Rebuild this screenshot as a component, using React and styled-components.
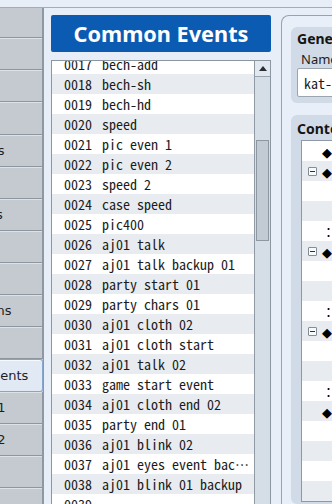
import React from "react"
import styled, { createGlobalStyle } from "styled-components"

const tabs = [
  "Actors",
  "Classes",
  "Skills",
  "Items",
  "Weapons",
  "Armors",
  "Enemies",
  "Troops",
  "States",
  "Animations",
  "Tilesets",
  "Common Events",
  "System 1",
  "System 2",
  "Types",
  "Terms",
]

const events = [
  [17, "bech-add"],
  [18, "bech-sh"],
  [19, "bech-hd"],
  [20, "speed"],
  [21, "pic even 1"],
  [22, "pic even 2"],
  [23, "speed 2"],
  [24, "case speed"],
  [25, "pic400"],
  [26, "aj01 talk"],
  [27, "aj01 talk backup 01"],
  [28, "party start 01"],
  [29, "party chars 01"],
  [30, "aj01 cloth 02"],
  [31, "aj01 cloth start"],
  [32, "aj01 talk 02"],
  [33, "game start event"],
  [34, "aj01 cloth end 02"],
  [35, "party end 01"],
  [36, "aj01 blink 02"],
  [37, "aj01 eyes event backup"],
  [38, "aj01 blink 01 backup"],
  [39, ""],
  [40, ""],
]

const commands = [
  { text: "◆Comment：kat-talk" },
  { text: "◆If：Switch 0001 is ON", toggle: true },
  { text: "◆Show Picture：1, aj01", indent: 1 },
  { text: "◆Wait：30 frames", indent: 1 },
  { text: "：End" },
  { text: "◆If：Switch 0002 is ON", toggle: true },
  { text: "◆Show Picture：2, aj01", indent: 1 },
  { text: "◆Wait：30 frames", indent: 1 },
  { text: "：End" },
  { text: "◆If：Switch 0003 is ON", toggle: true },
  { text: "◆Show Picture：3, aj01", indent: 1 },
  { text: "◆Wait：30 frames", indent: 1 },
  { text: "：End" },
  { text: "◆Erase Picture：1" },
  { text: "", indent: 1 },
  { text: "", indent: 1 },
  { text: "", indent: 1 },
  { text: "", indent: 1 },
]

const mono = `"Noto Sans Mono CJK JP", "DejaVu Sans Mono", monospace`

const GlobalStyle = createGlobalStyle`
  html, body {
    margin: 0;
    padding: 0;
    background: #e7eef7;
  }
  body {
    font-family: "Noto Sans", "DejaVu Sans", sans-serif;
    color: #1b1b1b;
  }
`

const Window = styled.div`
  width: 332px;
  height: 504px;
  overflow: hidden;
  background: #e7eef7;
  display: flex;
  flex-direction: column;
`

const TopStrip = styled.div`
  flex: none;
  height: 7px;
  border-bottom: 1px solid #a2acb6;
`

const Body = styled.div`
  flex: 1;
  display: flex;
  min-height: 0;
`

const Sidebar = styled.nav`
  flex: none;
  width: 135px;
  margin-left: -92px;
  overflow: hidden;
  background: #c4cad0;
`

const TabList = styled.div`
  margin-top: -2px;
  display: flex;
  flex-direction: column;
`

const Tab = styled.div`
  flex: none;
  height: 32.14px;
  box-sizing: border-box;
  display: flex;
  align-items: center;
  justify-content: center;
  font-family: "DejaVu Sans", sans-serif;
  font-size: 13px;
  white-space: nowrap;
  color: #1e1e1e;
  background: ${(p) => (p.$active ? "#e0e9f4" : "#c4cad0")};
  border-right: 1px solid ${(p) => (p.$active ? "#86a5cb" : "#8e98a2")};
  border-bottom: 1px solid ${(p) => (p.$active ? "#86a5cb" : "#8e969f")};
  border-top: ${(p) => (p.$active ? "1px solid #86a5cb" : "none")};
  border-radius: ${(p) => (p.$active ? "3px" : "0")};
  box-shadow: inset 0 1px 0 ${(p) => (p.$active ? "#f6f9fd" : "#dde2e7")};
`

const Main = styled.main`
  flex: 1;
  min-width: 0;
  display: flex;
  gap: 10px;
  padding: 7px 0 0 7px;
  border-left: 1px solid #8e98a2;
`

const ListColumn = styled.section`
  flex: none;
  width: 220px;
  display: flex;
  flex-direction: column;
  gap: 8px;
`

const TitleBar = styled.h1`
  flex: none;
  margin: 0;
  height: 37px;
  border-radius: 2px;
  background: #0b5bb3;
  color: #fff;
  display: flex;
  align-items: center;
  justify-content: center;
  font-family: "Noto Sans", sans-serif;
  font-weight: 700;
  font-size: 21.7px;
`

const ListBox = styled.div`
  flex: 1;
  min-height: 0;
  display: flex;
  border: 1px solid #8c96a0;
  border-bottom: none;
  background: #fff;
`

const Rows = styled.ul`
  flex: 1;
  min-width: 0;
  margin: 0;
  padding: 0;
  list-style: none;
  overflow: hidden;
`

const RowsInner = styled.div`
  margin-top: -7px;
`

const EventRow = styled.li`
  height: 20px;
  display: flex;
  align-items: center;
  padding: 0 2px 0 12px;
  background: ${(p) => (p.$shaded ? "#e8ecf0" : "#fff")};
  font-family: ${mono};
  font-size: 14px;
  color: #1c1c1c;
  white-space: nowrap;
`

const EventId = styled.span`
  flex: none;
  width: 38px;
`

const EventName = styled.span`
  flex: 1;
  min-width: 0;
  overflow: hidden;
  text-overflow: ellipsis;
`

const ScrollBar = styled.div`
  flex: none;
  width: 15px;
  border-left: 1px solid #8f9aa5;
  background: #d5dee7;
  display: flex;
  flex-direction: column;
`

const ScrollButton = styled.div`
  flex: none;
  height: 15px;
  background: #e2e8ef;
  border-bottom: 1px solid #9aa4ae;
  display: flex;
  align-items: center;
  justify-content: center;
`

const Thumb = styled.div`
  flex: none;
  margin: 63px 1px 0 1px;
  height: 99px;
  background: #c2cad3;
  border: 1px solid #8d97a1;
`

const RightPanel = styled.section`
  flex: none;
  width: 200px;
  display: flex;
  flex-direction: column;
  gap: 12px;
  padding: 11px 0 0 9px;
  background: #e8eff8;
  border: 1px solid #98a3ae;
  border-right: none;
  border-bottom: none;
  border-radius: 8px 0 0 0;
`

const Group = styled.div`
  display: flex;
  flex-direction: column;
  padding: ${(p) => p.$pad};
  background: #d0dbe7;
  border-radius: 6px;
`

const GroupTitle = styled.h2`
  margin: 0;
  height: 20px;
  line-height: 20px;
  font-family: "Noto Sans", sans-serif;
  font-size: 14px;
  font-weight: 700;
  color: #141414;
  white-space: nowrap;
`

const FieldLabel = styled.label`
  height: 17px;
  padding-top: 2px;
  line-height: 17px;
  padding-left: 4px;
  font-size: 13px;
  color: #1c1c1c;
`

const TextInput = styled.div`
  height: 29px;
  box-sizing: border-box;
  display: flex;
  align-items: center;
  padding-left: 6px;
  background: #fff;
  border: 1px solid #9ba5af;
  border-radius: 2px;
  font-family: ${mono};
  font-size: 14px;
  white-space: nowrap;
`

const Tree = styled.ul`
  margin: 1px 0 0 4px;
  padding: 0;
  list-style: none;
  background: #fff;
  border: 1px solid #8d99a6;
  border-right: none;
`

const TreeRow = styled.li`
  height: 20px;
  display: flex;
  align-items: center;
  padding-left: ${(p) => 6 + p.$indent * 20}px;
  background: ${(p) => (p.$shaded ? "#e8ecf0" : "#fff")};
  font-family: "DejaVu Sans", "Noto Sans CJK JP", sans-serif;
  font-size: 13px;
  color: #000;
  white-space: nowrap;
`

const ToggleSlot = styled.span`
  flex: none;
  width: 14px;
  height: 20px;
  display: flex;
  align-items: center;
`

const Collapse = styled.span`
  position: relative;
  width: 9px;
  height: 9px;
  box-sizing: border-box;
  border: 1px solid #838d98;
  border-radius: 1px;
  background: #f7f9fb;
  &::after {
    content: "";
    position: absolute;
    left: 1px;
    top: 3px;
    width: 5px;
    height: 1px;
    background: #333;
  }
`

function UpArrow() {
  return (
    <svg width="8" height="5" viewBox="0 0 8 5">
      <path d="M4 0 L8 5 L0 5 Z" fill="#2a2f36" />
    </svg>
  )
}

export default function App() {
  return (
    <>
      <GlobalStyle />
      <Window>
        <TopStrip />
        <Body>
          <Sidebar>
            <TabList>
              {tabs.map((t) => (
                <Tab key={t} $active={t === "Common Events"}>
                  {t}
                </Tab>
              ))}
            </TabList>
          </Sidebar>
          <Main>
            <ListColumn>
              <TitleBar>Common Events</TitleBar>
              <ListBox>
                <Rows>
                  <RowsInner>
                    {events.map(([id, name]) => (
                      <EventRow key={id} $shaded={id % 2 === 0}>
                        <EventId>{String(id).padStart(4, "0")}</EventId>
                        <EventName>{name}</EventName>
                      </EventRow>
                    ))}
                  </RowsInner>
                </Rows>
                <ScrollBar>
                  <ScrollButton>
                    <UpArrow />
                  </ScrollButton>
                  <Thumb />
                </ScrollBar>
              </ListBox>
            </ListColumn>
            <RightPanel>
              <Group $pad="2px 6px 6px 6px">
                <GroupTitle>General Settings</GroupTitle>
                <FieldLabel>Name:</FieldLabel>
                <TextInput>kat-talk</TextInput>
              </Group>
              <Group $pad="4px 0 0 6px" style={{ flex: 1 }}>
                <GroupTitle>Contents</GroupTitle>
                <Tree>
                  {commands.map((c, i) => (
                    <TreeRow key={i} $shaded={i % 2 === 1} $indent={c.indent || 0}>
                      <ToggleSlot>{c.toggle && <Collapse />}</ToggleSlot>
                      {c.text}
                    </TreeRow>
                  ))}
                </Tree>
              </Group>
            </RightPanel>
          </Main>
        </Body>
      </Window>
    </>
  )
}
